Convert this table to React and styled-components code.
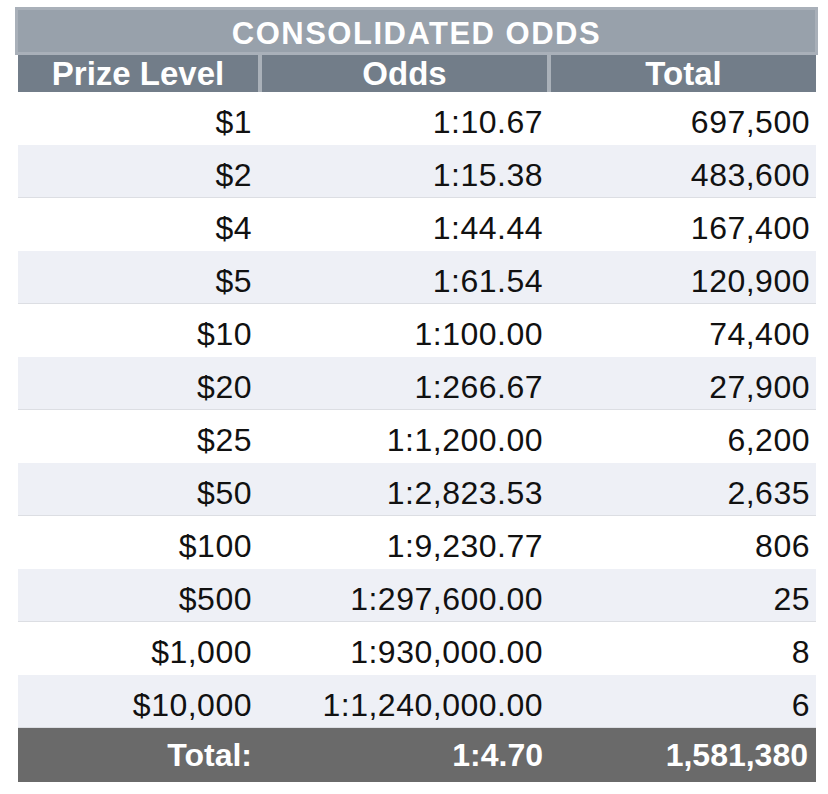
import React from 'react'
import styled, { createGlobalStyle } from 'styled-components'

const GlobalStyle = createGlobalStyle`
  body {
    margin: 0;
    background: #ffffff;
    font-family: "Liberation Sans", Arial, Helvetica, sans-serif;
  }
`

const Page = styled.div`
  padding: 7px 10px 12px 15px;
`

const Sheet = styled.div`
  width: 803px;
  display: flex;
  flex-direction: column;
  align-items: flex-start;
`

const TitleBar = styled.div`
  box-sizing: border-box;
  width: 803px;
  height: 48px;
  padding-top: 4px;
  border: 3px solid #a9b0b9;
  background-color: #98a1ab;
  color: #ffffff;
  font-weight: 700;
  font-size: 31px;
  letter-spacing: 1.5px;
  display: flex;
  align-items: center;
  justify-content: center;
  line-height: 1;
`

const Table = styled.div`
  width: 798px;
  margin-left: 3px;
  display: flex;
  flex-direction: column;
`

const HeaderRow = styled.div`
  display: grid;
  grid-template-columns: 240px 289px 269px;
  height: 37px;
  background-color: #727d89;
`

const HeaderCell = styled.div`
  box-sizing: border-box;
  display: flex;
  align-items: center;
  justify-content: center;
  color: #ffffff;
  font-weight: 700;
  font-size: 33px;
  line-height: 1;
  border-left: ${(p) => (p.$first ? 'none' : '4px solid #aab1b9')};
`

const Row = styled.div`
  box-sizing: border-box;
  display: grid;
  grid-template-columns: 240px 289px 269px;
  height: 53px;
  background-color: ${(p) => (p.$shade ? '#eef0f6' : '#ffffff')};
  border-bottom: 1px solid ${(p) => (p.$shade ? '#dcdee3' : 'transparent')};
`

const Cell = styled.div`
  display: flex;
  align-items: center;
  justify-content: flex-end;
  padding-top: 7px;
  padding-right: ${(p) => p.$pad}px;
  font-size: 32px;
  letter-spacing: 0.5px;
  color: #111111;
  line-height: 1;
`

const TotalRow = styled.div`
  display: grid;
  grid-template-columns: 240px 289px 269px;
  height: 54px;
  background-color: #6a6a6a;
`

const TotalCell = styled.div`
  display: flex;
  align-items: center;
  justify-content: flex-end;
  padding-right: ${(p) => p.$pad}px;
  font-size: 32px;
  font-weight: 700;
  color: #ffffff;
  line-height: 1;
`

const pads = [6, 4, 6]

const prizes = [
  ['$1', '1:10.67', '697,500'],
  ['$2', '1:15.38', '483,600'],
  ['$4', '1:44.44', '167,400'],
  ['$5', '1:61.54', '120,900'],
  ['$10', '1:100.00', '74,400'],
  ['$20', '1:266.67', '27,900'],
  ['$25', '1:1,200.00', '6,200'],
  ['$50', '1:2,823.53', '2,635'],
  ['$100', '1:9,230.77', '806'],
  ['$500', '1:297,600.00', '25'],
  ['$1,000', '1:930,000.00', '8'],
  ['$10,000', '1:1,240,000.00', '6'],
]

const App = () => {
  return (
    <Page>
      <GlobalStyle />
      <Sheet>
        <TitleBar>CONSOLIDATED ODDS</TitleBar>
        <Table>
          <HeaderRow>
            <HeaderCell $first>Prize Level</HeaderCell>
            <HeaderCell>Odds</HeaderCell>
            <HeaderCell>Total</HeaderCell>
          </HeaderRow>
          {prizes.map((row, i) => (
            <Row key={row[0]} $shade={i % 2 === 1}>
              {row.map((val, j) => (
                <Cell key={j} $pad={pads[j]}>{val}</Cell>
              ))}
            </Row>
          ))}
          <TotalRow>
            <TotalCell $pad={6}>Total:</TotalCell>
            <TotalCell $pad={4}>1:4.70</TotalCell>
            <TotalCell $pad={8}>1,581,380</TotalCell>
          </TotalRow>
        </Table>
      </Sheet>
    </Page>
  )
}

export default App
